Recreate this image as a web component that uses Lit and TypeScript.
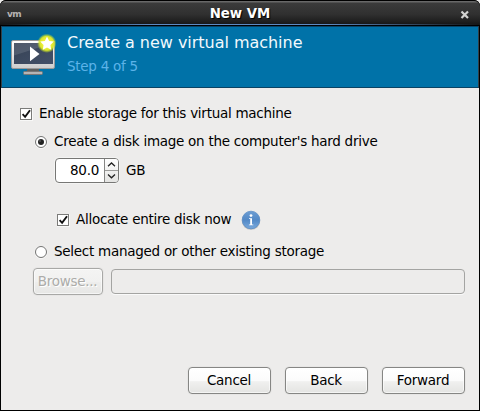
import { LitElement, html, css, svg } from "lit";
import { customElement, property } from "lit/decorators.js";

@customElement("toggle-mark")
class ToggleMark extends LitElement {
  @property() kind = "check";
  @property({ type: Boolean }) on = false;
  static styles = css`
    :host { display: block; flex: none; width: 14px; height: 14px; }
    svg { display: block; }
  `;
  render() {
    const box = svg`
      <rect x="1.5" y="1.5" width="12" height="12" fill="none" stroke="#f8f8f7"/>
      <rect x="1.5" y="1.5" width="11" height="11" fill="#fff" stroke="#7b7b79"/>
      ${this.on ? svg`<path d="M3.6 7.2 L6.1 9.8 L11 3.2" fill="none" stroke="#111" stroke-width="1.9"/>` : ""}`;
    const dot = svg`
      <circle cx="7" cy="7.4" r="6" fill="none" stroke="#fafafa"/>
      <circle cx="7" cy="7" r="5.5" fill="#fff" stroke="#737372"/>
      ${this.on ? svg`<circle cx="7" cy="7" r="3" fill="#222"/><circle cx="6" cy="6" r=".8" fill="#777"/>` : ""}`;
    return html`<svg width="14" height="14">${this.kind === "check" ? box : dot}</svg>`;
  }
}

@customElement("push-button")
class PushButton extends LitElement {
  @property({ type: Boolean, reflect: true }) disabled = false;
  static styles = css`
    :host { display: block; width: 83px; height: 27px; }
    button {
      display: block; box-sizing: border-box; width: 100%; height: 27px; padding: 0 1px 1px 0;
      border: 1px solid #868684; border-radius: 4px; color: #000;
      background: linear-gradient(#fff, #fbfbfb 50%, #f0f0ef 55%, #e4e4e2);
      box-shadow: inset 0 0 0 1px rgba(255,255,255,.6), 0 0 0 1px rgba(0,0,0,.025);
      font: inherit; letter-spacing: inherit; line-height: 24px; white-space: nowrap;
    }
    :host([disabled]) button {
      color: #acaca9; border-color: #a8a8a6; text-shadow: 1px 1px #fff;
      background: linear-gradient(#f4f4f3, #f1f1f0 50%, #ededec 55%, #e7e7e5);
    }
  `;
  render() {
    return html`<button ?disabled=${this.disabled}><slot></slot></button>`;
  }
}

@customElement("app-root")
class AppRoot extends LitElement {
  static styles = css`
    :host {
      display: block; width: 480px; height: 411px; overflow: hidden; background: #edeceb;
      font: 13.5px/18px "DejaVu Sans", sans-serif; letter-spacing: -.27px; color: #000;
    }
    * { box-sizing: border-box; }
    .window {
      height: 411px; display: flex; flex-direction: column; background: #000;
      border-radius: 6px 6px 0 0; padding: 0 1px 1px;
    }
    .title {
      height: 25px; flex: none; display: grid; grid-template-columns: 30px 1fr 30px; align-items: center;
      margin: 0 -1px; padding: 0 1px; border-top: 1px solid #000; border-radius: 6px 6px 0 0;
      background: linear-gradient(90deg, #151515, #5d8ac2 32%, #5d8ac2 68%, #151515) 0 23px / 100% 1px no-repeat,
        linear-gradient(#686868 0, #686868 1px, #3b3b3b 2px, #303030 55%, #1d1d1d 88%, #141414);
      color: #fff;
    }
    .title b { text-align: center; font-size: 13.33px; letter-spacing: 0; line-height: 24px; text-shadow: 1px 1px 1px #000; padding-top: 1px; }
    .logo { font: bold 9px/12px "DejaVu Sans", sans-serif; color: #b5b2b2; padding: 1px 0 0 6px; letter-spacing: -.7px; }
    .close { display: block; margin: 2px 0 0 11px; }
    .banner {
      height: 62px; flex: none; display: flex; margin-top: 1px; background: #0072a8;
      border: 1px solid #0a4364; border-left-color: #334047; border-right-color: #334047;
    }
    .monitor { width: 46px; height: 46px; flex: none; margin: 6px 0 0 8px; }
    .heads { margin-left: 11px; }
    h1 { margin: 5px 0 0; font-size: 16px; font-weight: normal; line-height: 22px; letter-spacing: -.03px; color: #f2f9fd; white-space: nowrap; }
    .step { margin-top: 2px; color: #5cb3e8; line-height: 20px; }
    .body { flex: 1; background: #edeceb; padding: 17px 14px 0 18px; display: flex; flex-direction: column; }
    .row { display: flex; align-items: center; height: 18px; white-space: nowrap; }
    .row span { margin: 0 0 2px 6px; }
    .radio { margin: 10px 0 0 15px; }
    .spinrow { margin: 7px 0 0 36px; height: 25px; }
    .spin { display: flex; width: 64px; height: 25px; border: 1px solid #777775; border-radius: 4px; background: #fff; overflow: hidden; box-shadow: 0 0 0 1px #f4f4f3; }
    .num { width: 49px; text-align: right; padding: 2px 5px 0 0; }
    .steps { width: 14px; border-left: 1px solid #868684; background: linear-gradient(#fff, #e4e4e2); }
    .steps svg { display: block; }
    .row span.unit { margin-left: 7px; }
    .alloc { margin: 28px 0 0 37px; }
    .info { flex: none; margin: 0 0 0 10px; }
    .managed { margin-top: 14px; }
    .browse { display: flex; align-items: center; gap: 8px; margin: 7px 0 0 14px; height: 27px; }
    .browse push-button { width: 70px; }
    .entry { flex: 1; height: 25px; border: 1px solid #a4a4a2; border-radius: 4px; box-shadow: 0 1px #fafafa; }
    .actions { display: flex; justify-content: flex-end; gap: 14px; margin-top: 72px; }
  `;

  render() {
    return html`
      <div class="window">
        <header class="title">
          <span class="logo">vm</span><b>New VM</b>
          <svg class="close" width="10" height="10"><path d="M1.5 1.5 L8 8 M8 1.5 L1.5 8" stroke="#d4d4d2" stroke-width="2.2"/></svg>
        </header>
        <section class="banner">
          <svg class="monitor" viewBox="10 33 46 46">
            <defs>
              <radialGradient id="glow"><stop offset=".4" stop-color="#f1f13c"/><stop offset=".72" stop-color="#d9e52c"/><stop offset="1" stop-color="#b9dd22" stop-opacity="0"/></radialGradient>
              <linearGradient id="frame" x2="0" y2="1"><stop offset="0" stop-color="#fff"/><stop offset="1" stop-color="#cdcdcd"/></linearGradient>
              <linearGradient id="screen" x2="1" y2="1"><stop offset="0" stop-color="#364255"/><stop offset="1" stop-color="#435068"/></linearGradient>
            </defs>
            <path d="M27 69H39V72H27Z" fill="#60605f"/>
            <rect x="23.5" y="71.5" width="19" height="3" rx="1" fill="#b4b4b4" stroke="#777"/>
            <rect x="11.5" y="40.5" width="43" height="28" rx="1.5" fill="url(#frame)" stroke="#999"/>
            <rect x="14" y="43" width="39" height="21" fill="url(#screen)"/>
            <path d="M14 43H53L14 55.5Z" fill="#fff" opacity=".12"/>
            <path d="M30 46.5L39.5 54L30 61.2Z" fill="#fff"/>
            <circle cx="46.8" cy="43.3" r="9.7" fill="url(#glow)"/>
            <path d="M47 36.5l2.1 4.4 4.7.7-3.4 3.3.8 4.8-4.2-2.2-4.2 2.2.8-4.8-3.4-3.3 4.7-.7z" fill="#fff"/>
          </svg>
          <div class="heads"><h1>Create a new virtual machine</h1><div class="step">Step 4 of 5</div></div>
        </section>
        <main class="body">
          <div class="row"><toggle-mark on></toggle-mark><span>Enable storage for this virtual machine</span></div>
          <div class="row radio"><toggle-mark kind="radio" on></toggle-mark><span>Create a disk image on the computer's hard drive</span></div>
          <div class="row spinrow">
            <div class="spin"><div class="num">80.0</div>
              <div class="steps"><svg width="13" height="23"><path d="M0 11.5H13" stroke="#9b9b99"/><path d="M3 7.3L6.5 4L10 7.3M3 15.5L6.5 18.8L10 15.5" fill="none" stroke="#222" stroke-width="1.3"/></svg></div>
            </div>
            <span class="unit">GB</span>
          </div>
          <div class="row alloc"><toggle-mark on></toggle-mark><span>Allocate entire disk now</span>
            <svg class="info" width="20" height="20">
              <defs><linearGradient id="blue" x2="0" y2="1"><stop offset="0" stop-color="#6c9dd3"/><stop offset=".5" stop-color="#5389c6"/><stop offset="1" stop-color="#79a9dc"/></linearGradient></defs>
              <ellipse cx="10" cy="11" rx="9.2" ry="8.8" fill="#8b8b8b" opacity=".5"/>
              <circle cx="10" cy="10" r="8.8" fill="url(#blue)" stroke="#5c8ec6" stroke-width=".8"/>
              <circle cx="10" cy="5.6" r="1.4" fill="#fff"/><path d="M8 8.3H11V14.5H12.3V15.3H7.9V14.5H9.2V9H8Z" fill="#fff"/>
            </svg>
          </div>
          <div class="row radio managed"><toggle-mark kind="radio"></toggle-mark><span>Select managed or other existing storage</span></div>
          <div class="browse"><push-button disabled>Browse...</push-button><div class="entry"></div></div>
          <div class="actions"><push-button>Cancel</push-button><push-button>Back</push-button><push-button>Forward</push-button></div>
        </main>
      </div>`;
  }
}
